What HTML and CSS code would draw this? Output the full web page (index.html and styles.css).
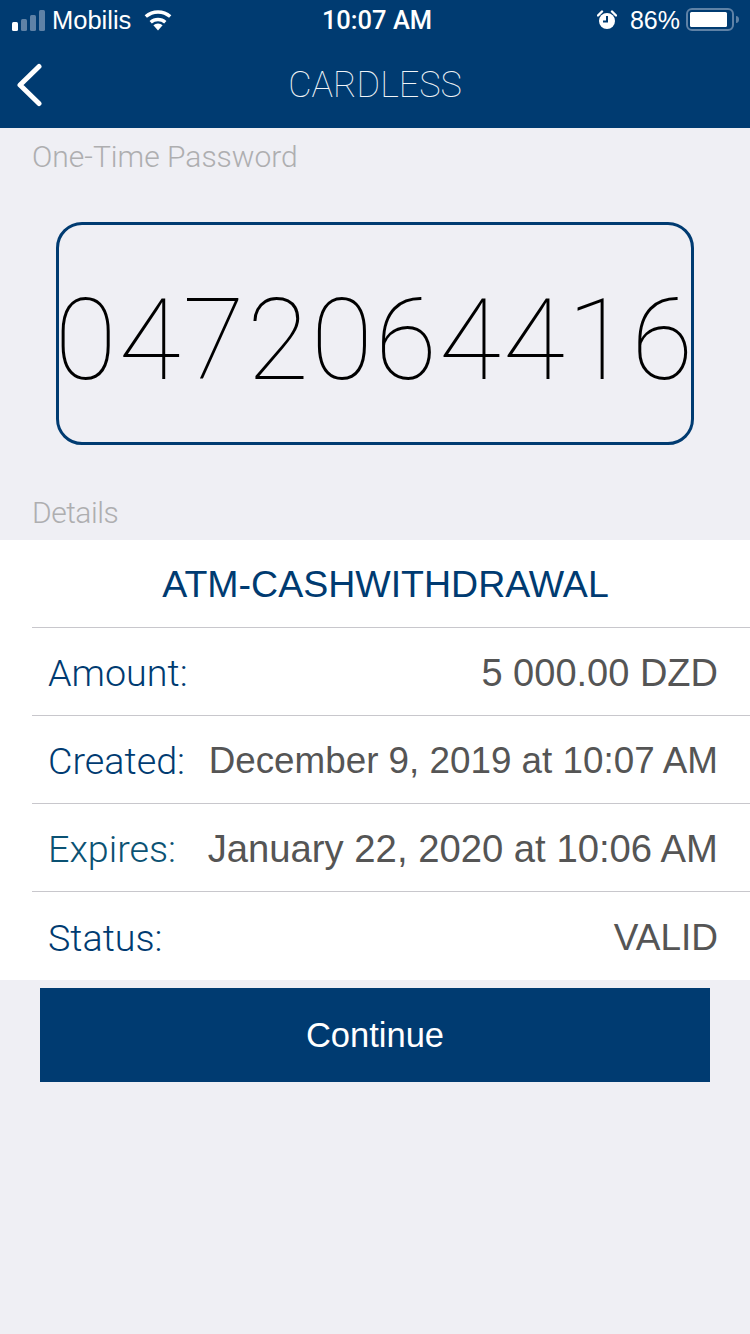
FILE: index.html
```html
<!DOCTYPE html>
<html lang="en">
<head>
<meta charset="utf-8">
<title>Cardless</title>
<link rel="stylesheet" href="styles.css">
</head>
<body>
<header class="header">
  <div class="status">
    <div class="status-left">
      <svg class="signal" width="33" height="21" viewBox="0 0 33 21">
        <rect x="0" y="12" width="6" height="9" rx="1.5" fill="#fff"/>
        <rect x="9" y="9" width="6" height="12" rx="1.5" fill="#5f82a6"/>
        <rect x="18" y="5" width="6" height="16" rx="1.5" fill="#5f82a6"/>
        <rect x="27" y="0" width="6" height="21" rx="1.5" fill="#5f82a6"/>
      </svg>
      <span class="carrier">Mobilis</span>
      <svg class="wifi" width="30" height="22" viewBox="0 0 30 22">
        <path d="M15 21.5l-4.600-5.300a6.800 6.800 0 0 1 9.200 0z" fill="#fff"/>
        <path d="M7.700 13.200a11 11 0 0 1 14.600 0" fill="none" stroke="#fff" stroke-width="3.400"/>
        <path d="M2.800 7.600a18.300 18.300 0 0 1 24.400 0" fill="none" stroke="#fff" stroke-width="3.400"/>
      </svg>
    </div>
    <div class="clock">10:07 AM</div>
    <div class="status-right">
      <svg class="alarm" width="20" height="20" viewBox="0 0 20 20">
        <circle cx="10" cy="11" r="8" fill="#fff"/>
        <path d="M10 6v5.500H6" fill="none" stroke="#003b71" stroke-width="2"/>
        <path d="M1 5.500L5 1.500M19 5.500L15 1.500" stroke="#fff" stroke-width="2.400" stroke-linecap="round"/>
      </svg>
      <span class="battery-text">86%</span>
      <svg class="battery" width="54" height="24" viewBox="0 0 54 24">
        <rect x="1" y="1" width="46" height="21" rx="5" fill="none" stroke="#5f82a6" stroke-width="2"/>
        <rect x="4" y="4" width="37" height="15" rx="1.500" fill="#fff"/>
        <path d="M50 8c2 0 3 1.500 3 3.500s-1 3.500-3 3.500z" fill="#5f82a6"/>
      </svg>
    </div>
  </div>
  <nav class="nav">
    <svg class="back" width="28" height="44" viewBox="0 0 28 44">
      <path d="M24 3.500L5 22l19 18.500" fill="none" stroke="#fff" stroke-width="5" stroke-linecap="round" stroke-linejoin="round"/>
    </svg>
    <h1 class="title">CARDLESS</h1>
  </nav>
</header>
<main>
  <p class="section-label otp-label">One-Time Password</p>
  <div class="otp-box"><span class="otp-code">0472064416</span></div>
  <p class="section-label details-label">Details</p>
  <section class="details">
    <div class="details-title-row"><h2 class="details-title">ATM-CASHWITHDRAWAL</h2></div>
    <div class="row"><span class="key">Amount:</span><span class="val">5 000.00 DZD</span></div>
    <div class="row"><span class="key">Created:</span><span class="val val-created">December 9, 2019 at 10:07 AM</span></div>
    <div class="row"><span class="key key-teal">Expires:</span><span class="val val-expires">January 22, 2020 at 10:06 AM</span></div>
    <div class="row row-last"><span class="key">Status:</span><span class="val val-status">VALID</span></div>
  </section>
  <button class="continue" type="button">Continue</button>
</main>
</body>
</html>
```
FILE: styles.css
```css
* { box-sizing: border-box; }
html, body { margin: 0; padding: 0; }
body {
  width: 750px;
  height: 1334px;
  overflow: hidden;
  background: #efeff4;
  font-family: "Liberation Sans", Arial, sans-serif;
}
.header { height: 128px; background: #003b71; color: #fff; }
.status {
  height: 40px;
  display: grid;
  grid-template-columns: 1fr auto 1fr;
  align-items: center;
  padding: 0 10px 0 12px;
}
.status-left, .status-right { display: flex; align-items: center; }
.status-right { justify-content: flex-end; }
.carrier { font-size: 25.5px; margin-left: 7px; }
.wifi { margin-left: 12px; }
.clock { font-size: 25.5px; font-family: Roboto, sans-serif; font-weight: 500; padding-left: 2px; }
.alarm { margin-right: 13px; }
.battery-text { font-size: 25px; margin-right: 6px; }
.nav { height: 88px; position: relative; display: flex; align-items: center; justify-content: center; padding-top: 2px; }
.back { position: absolute; left: 15px; top: 23px; }
.title { margin: 0; font-size: 36px; font-weight: 100; font-family: Roboto, sans-serif; color: #f2f5f8; }
.section-label {
  margin: 0;
  color: #aeaeb0;
  font-size: 30px;
  font-weight: 300;
  font-family: Roboto, "Liberation Sans", sans-serif;
  line-height: 36px;
  padding-left: 32px;
}
.otp-label { padding-top: 11px; height: 47px; }
.otp-box {
  width: 638px;
  height: 223px;
  margin: 47px auto 0 56px;
  border: 3px solid #003b71;
  border-radius: 26px;
  display: flex;
  align-items: center;
  justify-content: center;
  padding-top: 14px;
}
.otp-code {
  font-family: Roboto, sans-serif;
  font-weight: 100;
  font-size: 113px;
  letter-spacing: 2.2px;
  line-height: 1;
  color: #000;
  white-space: nowrap;
}
.details-label { margin-top: 50px; height: 45px; letter-spacing: -0.5px; }
.details { background: #fff; height: 440px; }
.details-title-row {
  height: 88px;
  margin-left: 32px;
  padding: 2px 11px 0 0;
  border-bottom: 1px solid #c8c7cc;
  display: flex;
  align-items: center;
  justify-content: center;
}
.details-title { margin: 0; font-size: 37.5px; font-weight: 400; color: #003b71; }
.row {
  height: 88px;
  margin-left: 32px;
  padding: 3px 32px 0 16px;
  border-bottom: 1px solid #c8c7cc;
  display: flex;
  align-items: center;
  justify-content: space-between;
}
.row-last { border-bottom: 0; }
.key { color: #003b71; font-family: Roboto, sans-serif; font-weight: 300; font-size: 37.7px; }
.key-teal { color: #0b5273; }
.val { color: #555; font-family: "Liberation Sans", sans-serif; font-size: 38px; }
.val-created { font-size: 36.8px; }
.val-expires { font-size: 38.25px; }
.val-status { font-size: 37px; }
.continue {
  display: block;
  width: 670px;
  height: 94px;
  margin: 8px 0 0 40px;
  border: 0;
  background: #003b71;
  color: #fff;
  font-family: "Liberation Sans", sans-serif;
  font-size: 34.5px;
}
```
